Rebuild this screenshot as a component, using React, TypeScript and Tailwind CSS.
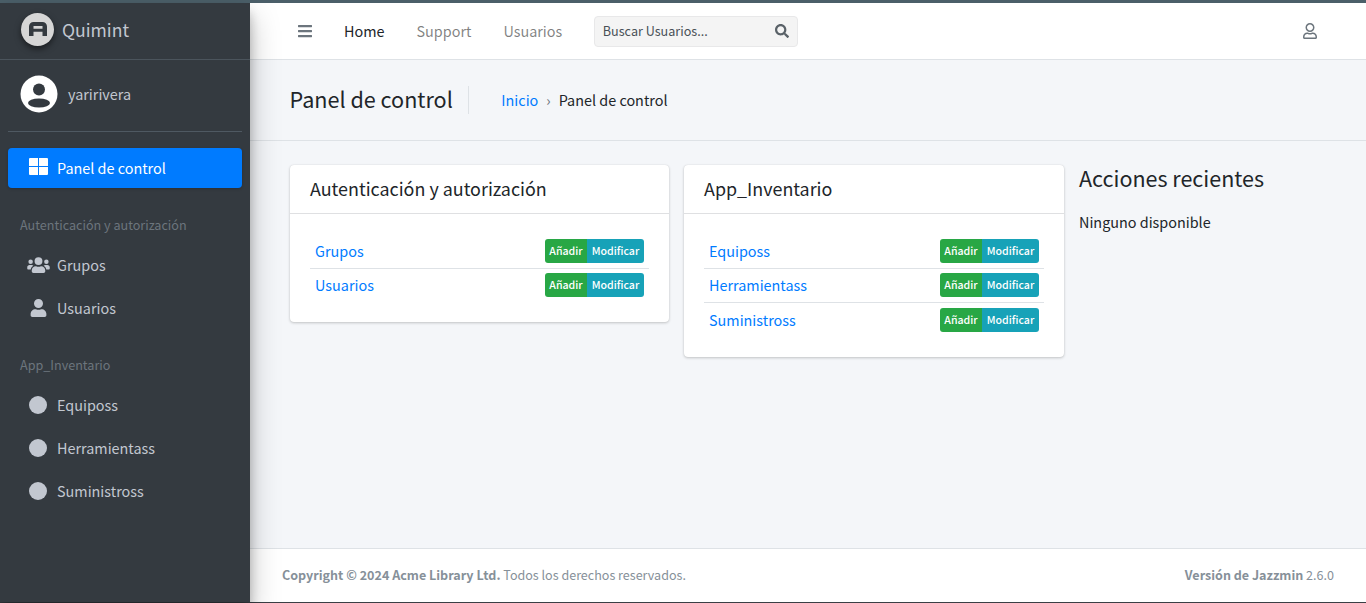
import type { ReactNode } from "react";
import { FaBars, FaRegUser, FaSearch } from "react-icons/fa";

const font = "font-['Noto_Sans_CJK_SC',sans-serif]";

function AddChange() {
	return (
		<div className="flex h-6 text-[10.6px] leading-[23px] font-medium text-white">
			<span className="w-[42px] rounded-l-[3px] bg-[#28a745] text-center">Añadir</span>
			<span className="w-[57px] rounded-r-[3px] bg-[#17a2b8] text-center">Modificar</span>
		</div>
	);
}

function ModelCard({ title, rows, width }: { title: string; rows: string[]; width: string }) {
	return (
		<div className={`${width} self-start rounded-[4px] bg-white shadow-[0_0_1px_rgba(0,0,0,0.125),0_1px_3px_rgba(0,0,0,0.2)]`}>
			<h3 className="h-[49px] border-b border-[#dfe0e2] px-5 text-[17.9px] leading-[46px] text-[#212529]">{title}</h3>
			<div className="px-5 pt-[19.4px] pb-5">
				{rows.map((name, i) => (
					<div
						key={name}
						className={`relative flex h-[34.5px] items-start justify-between px-[5px] pt-[5.25px] ${i > 0 ? "border-t border-[#dee2e6]" : ""}`}
					>
						<a className={`text-[14.4px] leading-6 text-[#007bff] ${i > 0 ? "-mt-px" : ""}`}>{name}</a>
						<div className={i > 0 ? "-mt-px" : ""}>
							<AddChange />
						</div>
					</div>
				))}
			</div>
		</div>
	);
}

function SideLink({ label, icon }: { label: string; icon: ReactNode }) {
	return (
		<div className="flex h-[43px] items-center text-[14.4px] text-[#c2c7d0]">
			<span className="flex w-[57px] shrink-0 justify-center pl-[19px]">{icon}</span>
			<span>{label}</span>
		</div>
	);
}

const Circle = <span className="block h-[18px] w-[18px] rounded-full bg-[#c2c7d0]" />;

export default function App() {
	return (
		<div className={`flex h-[603px] w-[1366px] flex-col overflow-hidden bg-[#f4f6f9] leading-normal ${font}`}>
			<div className="h-[3px] shrink-0 bg-[#4b5f69]" />
			<div className="flex min-h-0 flex-1">
				{/* Sidebar */}
				<aside className="z-10 w-[250px] shrink-0 bg-[#343a40] shadow-[0_14px_28px_rgba(0,0,0,0.25),0_10px_10px_rgba(0,0,0,0.22)]">
					<div className="flex h-[57px] items-center border-b border-[#4b545c] pb-[4px] pl-[21px]">
						<div className="flex h-[33px] w-[33px] items-center justify-center rounded-full bg-[#d6d6d6] shadow-[0_3px_6px_rgba(0,0,0,0.5)]">
							<svg width="18" height="14" viewBox="0 0 18 14">
								<path
									fillRule="evenodd"
									d="M0 14V4.500A4.500 4.500 0 0 1 4.500 0h9A4.500 4.500 0 0 1 18 4.500V14h-4.500V9.800h-9V14zM4.500 4v2.800h9V4z"
									fill="#343a40"
								/>
							</svg>
						</div>
						<span className="ml-2 pt-[3px] text-[17.6px] text-[#c2c7d0]">Quimint</span>
					</div>
					<div className="mx-2 flex h-[72px] items-center border-b border-[#4f5962] pb-[3px] pl-3">
						<svg width="38" height="38" viewBox="0 0 38 38">
							<circle cx="19" cy="19" r="18.500" fill="#fff" />
							<circle cx="19" cy="14.500" r="6" fill="#343a40" />
							<ellipse cx="19" cy="28" rx="11" ry="4.500" fill="#343a40" />
						</svg>
						<span className="ml-[10px] text-[14.4px] text-[#c2c7d0]">yaririvera</span>
					</div>
					<nav className="px-2 pt-4">
						<div className="flex h-10 items-center rounded-[4px] bg-[#007bff] text-[14.4px] text-white shadow-[0_1px_3px_rgba(0,0,0,0.2)]">
							<span className="-mt-[3px] flex w-[49px] shrink-0 justify-center pl-[11px]">
								<svg width="19" height="17" viewBox="0 0 19 17" fill="#fff">
									<path d="M0 1a1 1 0 0 1 1-1h8v8H0zM10 0h8a1 1 0 0 1 1 1v7h-9zM0 9h9v8H1a1 1 0 0 1-1-1zM10 9h9v7a1 1 0 0 1-1 1h-8z" />
								</svg>
							</span>
							<span>Panel de control</span>
						</div>
					</nav>
					<div className="mt-[25px] h-[24px] pl-5 text-[12.6px] leading-[24px] text-[#6c757d]">Autenticación y autorización</div>
					<div className="mt-[6px]">
						<SideLink
							label="Grupos"
							icon={
								<svg width="23" height="18" viewBox="0 0 640 512" fill="#c2c7d0">
									<path d="M96 224a64 64 0 1 0 0-128 64 64 0 0 0 0 128zm448 0a64 64 0 1 0 0-128 64 64 0 0 0 0 128zm32 32h-64c-17.600 0-33.500 7.100-45.100 18.600 40.300 22.100 68.900 62 75.100 109.400h66c17.700 0 32-14.300 32-32v-32c0-35.300-28.700-64-64-64zm-256 0a112 112 0 1 0 0-224 112 112 0 0 0 0 224zm76.800 32h-8.300c-20.800 10-43.900 16-68.500 16s-47.600-6-68.500-16h-8.300C179.600 288 128 339.600 128 403.200V432c0 26.500 21.500 48 48 48h288c26.500 0 48-21.500 48-48v-28.800c0-63.600-51.600-115.200-115.200-115.200zm-223.700-13.400C161.500 263.100 145.600 256 128 256H64c-35.300 0-64 28.700-64 64v32c0 17.700 14.300 32 32 32h65.900c6.300-47.400 34.900-87.300 75.200-109.400z" />
								</svg>
							}
						/>
						<SideLink
							label="Usuarios"
							icon={
								<svg width="17" height="18" viewBox="0 0 448 512" fill="#c2c7d0">
									<path d="M224 256a128 128 0 1 0 0-256 128 128 0 0 0 0 256zm89.600 32h-16.700c-22.200 10.200-46.900 16-72.900 16s-50.600-5.800-72.900-16h-16.700C60.200 288 0 348.200 0 422.400V464c0 26.500 21.500 48 48 48h352c26.500 0 48-21.500 48-48v-41.600c0-74.200-60.200-134.400-134.400-134.400z" />
								</svg>
							}
						/>
					</div>
					<div className="mt-[24px] h-[24px] pl-5 text-[12.6px] leading-[24px] text-[#6c757d]">App_Inventario</div>
					<div className="mt-[6px]">
						<SideLink label="Equiposs" icon={Circle} />
						<SideLink label="Herramientass" icon={Circle} />
						<SideLink label="Suministross" icon={Circle} />
					</div>
				</aside>

				{/* Main */}
				<div className="flex min-w-0 flex-1 flex-col">
					<header className="flex h-[57px] shrink-0 items-center border-b border-[#dee2e6] bg-white pr-[48px] pl-[47px]">
						<FaBars size={16} className="text-[#6c757d]" />
						<div className="ml-[31px] flex gap-8 text-[14.4px] text-[#00000080]">
							<a className="text-[#212529]">Home</a>
							<a>Support</a>
							<a>Usuarios</a>
						</div>
						<div className="ml-8 flex h-[31px] w-[204px] items-center justify-between rounded-[4px] border border-[#e8e8e9] bg-[#f4f4f4] pr-2 pl-[7.5px] text-[12.6px] text-[#495057]">
							<span>Buscar Usuarios...</span>
							<FaSearch size={14} className="text-[#5a6268]" />
						</div>
						<FaRegUser size={16} className="ml-auto text-[#6c757d]" />
					</header>

					<div className="flex h-[81px] shrink-0 items-center border-b border-[#dee2e6] pl-[39.5px]">
						<h1 className="h-[28px] border-r border-[#dee2e6] pr-[15.5px] text-[21.6px] leading-[26px] text-[#212529]">Panel de control</h1>
						<div className="ml-8 flex items-center text-[14.4px] text-[#212529]">
							<a className="text-[#007bff]">Inicio</a>
							<span className="mx-2 text-[#6c757d]">›</span>
							<span>Panel de control</span>
						</div>
					</div>

					<main className="flex min-h-0 flex-1 gap-[15px] pt-6 pl-10">
						<ModelCard width="w-[379px]" title="Autenticación y autorización" rows={["Grupos", "Usuarios"]} />
						<ModelCard width="w-[380px]" title="App_Inventario" rows={["Equiposs", "Herramientass", "Suministross"]} />
						<div className="-mt-[2px]">
							<h4 className="text-[21.5px] leading-[29px] text-[#212529]">Acciones recientes</h4>
							<p className="mt-[18px] text-[14.4px] leading-6 text-[#212529]">Ninguno disponible</p>
						</div>
					</main>

					<footer className="flex h-[54px] shrink-0 items-center justify-between border-t border-[#dee2e6] bg-white px-8 text-[12.55px] text-[#869099]">
						<span>
							<b className="font-bold">Copyright © 2024 Acme Library Ltd.</b> Todos los derechos reservados.
						</span>
						<span>
							<b className="font-bold">Versión de Jazzmin</b> 2.6.0
						</span>
					</footer>
				</div>
			</div>
			<div className="h-[1px] shrink-0 bg-[#3a3f45]" />
		</div>
	);
}
